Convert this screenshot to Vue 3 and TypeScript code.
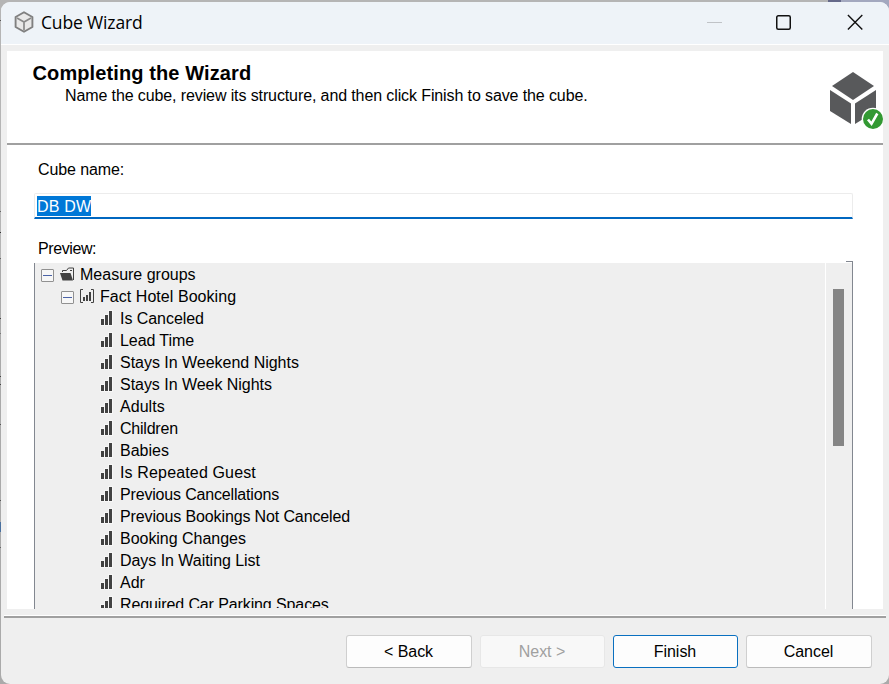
<script setup lang="ts">
import { ref } from 'vue'

interface Measure {
  name: string
  tracking: number
}

const cubeName = ref('DB DW')
const measures: Measure[] = [
  { name: 'Is Canceled', tracking: -0.05 },
  { name: 'Lead Time', tracking: -0.08 },
  { name: 'Stays In Weekend Nights', tracking: -0.02 },
  { name: 'Stays In Week Nights', tracking: -0.04 },
  { name: 'Adults', tracking: 0.05 },
  { name: 'Children', tracking: -0.22 },
  { name: 'Babies', tracking: 0 },
  { name: 'Is Repeated Guest', tracking: 0.15 },
  { name: 'Previous Cancellations', tracking: -0.17 },
  { name: 'Previous Bookings Not Canceled', tracking: -0.13 },
  { name: 'Booking Changes', tracking: -0.03 },
  { name: 'Days In Waiting List', tracking: -0.04 },
  { name: 'Adr', tracking: 0 },
  { name: 'Required Car Parking Spaces', tracking: -0.11 },
]
</script>

<template>
  <div class="desktop">
    <div class="window">
      <header class="titlebar">
        <svg class="app-icon" width="20" height="22" viewBox="0 0 20 22" fill="none">
          <path d="M10 1.2 18.4 6v10L10 20.8 1.6 16V6z" fill="#e9e9e9" stroke="#808080" stroke-width="1.900" stroke-linejoin="round" />
          <path d="M3 7l7 4 7-4M10 11v8.500" stroke="#8a8a8a" stroke-width="1.700" />
        </svg>
        <span class="title">Cube Wizard</span>
        <div class="controls">
          <svg width="15" height="16" viewBox="0 0 15 16"><path d="M0 8.500h15" stroke="#c0c3c7" /></svg>
          <svg width="15" height="16" viewBox="0 0 15 16"><rect x=".75" y="1.750" width="13.500" height="13.500" rx="1.500" fill="none" stroke="#111" stroke-width="1.500" /></svg>
          <svg width="16" height="16" viewBox="0 0 16 16"><path d="M.9 1.100l14.400 14.400M15.300 1.100.900 15.500" stroke="#111" stroke-width="1.400" /></svg>
        </div>
      </header>

      <main class="page">
        <section class="banner">
          <div class="banner-text">
            <h1>Completing the Wizard</h1>
            <p>Name the cube, review its structure, and then click Finish to save the cube.</p>
          </div>
          <svg class="cube" width="54" height="58" viewBox="0 0 54 58">
            <g fill="#58595b">
              <path d="M24 0 45 14 24 28 3 14z" />
              <path d="M1 18 22 31.500V52L1 39z" />
              <path d="M47 18 26 31.500V52L47 39z" />
            </g>
            <circle cx="44" cy="47" r="11.300" fill="#fff" />
            <circle cx="44" cy="47" r="10" fill="#339933" />
            <path d="M39 47.500l3.500 4.300 5.800-10.300" fill="none" stroke="#fff" stroke-width="2.600" />
          </svg>
        </section>

        <section class="form">
          <div class="label name-label">Cube name:</div>
          <div class="field"><span class="selected">{{ cubeName }}</span></div>
          <div class="label preview-label">Preview:</div>
          <div class="preview">
            <div class="tree">
              <div class="row root">
                <span class="toggle"></span>
                <svg class="folder" width="14" height="14" viewBox="0 0 14 14">
                  <path d="M2.500 5V3.500h4l2-2.500h5v12" fill="none" stroke="#424242" />
                  <path d="M0 6h10.500L13 13.500H2.500z" fill="#424242" />
                  <path d="M10 3.500h2" stroke="#424242" />
                </svg>
                <span class="text">Measure groups</span>
              </div>
              <div class="row group">
                <span class="toggle"></span>
                <svg class="bracket" width="14" height="14" viewBox="0 0 14 14">
                  <path d="M3 .5H.5v13H3M11 .5h2.500v13H11" fill="none" stroke="#424242" />
                  <path d="M3 8h2v4H3zM6 6h2v6H6zM9 3h2v9H9z" fill="#424242" />
                </svg>
                <span class="text wide">Fact Hotel Booking</span>
              </div>
              <div v-for="m in measures" :key="m.name" class="row measure">
                <svg class="bars" width="13" height="16" viewBox="0 0 13 16">
                  <path d="M0 8h4V4h4V0h5v16H0z" fill="#f7f7f7" />
                  <path d="M1 9h3v6H1zM5 5h3v10H5zM9 1h3v14H9z" fill="#424242" />
                </svg>
                <span class="text" :style="{ letterSpacing: m.tracking + 'px' }">{{ m.name }}</span>
              </div>
            </div>
            <div class="scrollbar"><div class="thumb"></div></div>
            <i class="corner"></i>
          </div>
        </section>
      </main>

      <footer class="footer">
        <button class="btn">&lt; Back</button>
        <button class="btn disabled" disabled>Next &gt;</button>
        <button class="btn primary">Finish</button>
        <button class="btn">Cancel</button>
      </footer>
    </div>
  </div>
</template>

<style>
body {
  margin: 0;
  overflow: hidden;
}
</style>

<style scoped>
.desktop {
  box-sizing: border-box;
  width: 889px;
  height: 684px;
  padding: 2px 0 0 1px;
  background:
    linear-gradient(90deg, transparent 828px, #65698a 828px 841px, #a3a8bf 841px) 0 0 / 889px 12px no-repeat,
    linear-gradient(#b5b5b5 20px, #555 20px 21px, #b5b5b5 21px 211px, #666 211px 212px, #b5b5b5 212px 232px, #333 232px 233px, #b5b5b5 233px 258px, #666 258px 259px, #aaa 259px 318px, #444 318px 319px, #aaa 319px 333px, #777 333px 334px, #aaa 334px 376px, #444 376px 377px, #aaa 377px 384px, #444 384px 385px, #aaa 385px 424px, #555 424px 425px, #aaa 425px 500px, #555 500px 501px, #aaa 501px 522px, #49709f 522px 532px, #aaa 532px 547px, #666 547px 548px, #aaa 548px);
  font-family: "Liberation Sans", Arial, sans-serif;
  font-size: 16px;
  color: #000;
  overflow: hidden;
}
.window {
  display: flex;
  flex-direction: column;
  width: 888px;
  height: 682px;
  border-radius: 9px;
  background: #efefef;
  overflow: hidden;
}
.titlebar {
  flex: none;
  box-sizing: border-box;
  display: flex;
  align-items: center;
  height: 43px;
  padding: 0 26px 2px 13px;
  border-bottom: 1px solid #fff;
  background: #eef3f8;
}
.title {
  margin-left: 7px;
  font-family: "Open Sans", "Noto Sans", sans-serif;
  font-size: 17.500px;
  letter-spacing: -0.15px;
}
.controls {
  display: grid;
  grid-template-columns: 69px 71px 16px;
  margin-left: auto;
}
.page {
  flex: none;
  display: flex;
  flex-direction: column;
  width: 876px;
  height: 558px;
  margin: 6px 0 0 6px;
  background: #fff;
  overflow: hidden;
}
.banner {
  flex: none;
  box-sizing: border-box;
  display: flex;
  justify-content: space-between;
  height: 94px;
  padding: 10px 0 0 25.500px;
  border-bottom: 2px solid #a0a0a0;
}
h1 {
  margin: 0;
  font-size: 20px;
  line-height: 24px;
  letter-spacing: 0.11px;
}
p {
  margin: 1px 0 0 32.500px;
  line-height: 20px;
  letter-spacing: -0.11px;
}
.cube {
  margin-top: 11px;
}
.form {
  display: flex;
  flex-direction: column;
  flex: 1;
  padding: 15px 30px 0 27px;
}
.label {
  flex: none;
  margin-left: 4px;
  line-height: 20px;
}
.name-label {
  letter-spacing: -0.1px;
}
.field {
  flex: none;
  box-sizing: border-box;
  height: 26px;
  margin-top: 13px;
  padding: 2px;
  border: 1px solid #ececec;
  border-bottom: 2px solid #0067c0;
  border-radius: 2px 2px 0 0;
}
.selected {
  display: inline-block;
  height: 20px;
  line-height: 22px;
  letter-spacing: 0.2px;
  background: #0078d7;
  color: #fff;
}
.preview-label {
  margin-top: 20px;
  letter-spacing: -0.4px;
}
.preview {
  position: relative;
  flex: none;
  box-sizing: border-box;
  display: flex;
  height: 346px;
  margin-top: 4px;
  border-left: 1px solid #828790;
  border-right: 1px solid #828790;
  background: #efefef;
}
.tree {
  flex: 1;
  height: 345px;
  overflow: hidden;
}
.row {
  display: flex;
  align-items: center;
  height: 22px;
  white-space: nowrap;
}
.text {
  padding-top: 2px;
}
.wide {
  letter-spacing: 0.05px;
}
.root {
  padding-left: 6px;
}
.group {
  padding-left: 26px;
}
.measure {
  padding-left: 65px;
}
.toggle {
  box-sizing: border-box;
  width: 13px;
  height: 13px;
  margin-top: 3px;
  border: 1px solid #919191;
  border-radius: 1px;
  background: linear-gradient(#4b63a7, #4b63a7) center / 9px 1px no-repeat, #f7f7f7;
}
.folder {
  margin: 0 6px 1px;
}
.bracket {
  margin: 0 6px;
}
.bars {
  margin-right: 7px;
}
.scrollbar {
  flex: none;
  box-sizing: border-box;
  width: 27px;
  padding: 26px 0 0 7px;
  border-left: 1px solid #fff;
}
.thumb {
  width: 11px;
  height: 157px;
  background: #858585;
}
.corner {
  position: absolute;
  top: -2px;
  right: -1px;
  width: 7px;
  height: 2px;
  box-sizing: border-box;
  border-top: 1px solid #828790;
  border-right: 1px solid #828790;
}
.footer {
  display: flex;
  flex: 1;
  gap: 8px;
  align-items: flex-start;
  justify-content: flex-end;
  margin: 7px 3px 0;
  padding: 17px 14px 0 0;
  border-top: 2px solid #a0a0a0;
  box-shadow: 0 -1px #fff;
}
.btn {
  box-sizing: border-box;
  width: 126px;
  height: 33px;
  padding: 0 1px 0 0;
  border: 1px solid #cfcfcf;
  border-bottom-color: #bbb;
  border-radius: 3px;
  background: #fdfdfd;
  font: inherit;
  letter-spacing: -0.05px;
  color: #000;
}
.btn.disabled {
  width: 125px;
  border-color: #e7e7e7;
  background: #f8f8f8;
  color: #a0a0a0;
}
.btn.primary {
  width: 125px;
  border-color: #0a70c0;
}
</style>
